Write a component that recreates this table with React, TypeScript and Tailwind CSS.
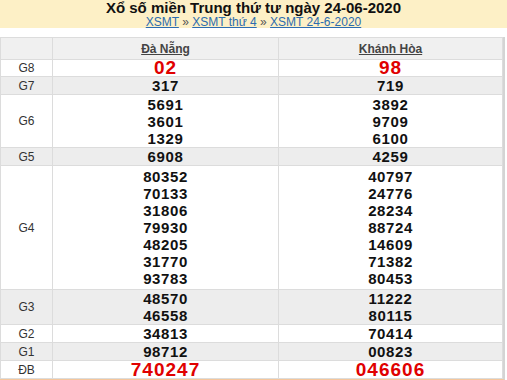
import React from "react";

type Row = {
  label: string;
  a: string[];
  b: string[];
  h: string;
  gray?: boolean;
  red?: boolean;
};

const rows: Row[] = [
  { label: "G8", a: ["02"], b: ["98"], h: "h-[17px]", red: true },
  { label: "G7", a: ["317"], b: ["719"], h: "h-[18px]", gray: true },
  { label: "G6", a: ["5691", "3601", "1329"], b: ["3892", "9709", "6100"], h: "h-[53px]" },
  { label: "G5", a: ["6908"], b: ["4259"], h: "h-[18px]", gray: true },
  {
    label: "G4",
    a: ["80352", "70133", "31806", "79930", "48205", "31770", "93783"],
    b: ["40797", "24776", "28234", "88724", "14609", "71382", "80453"],
    h: "h-[124px]",
  },
  { label: "G3", a: ["48570", "46558"], b: ["11222", "80115"], h: "h-[34px]", gray: true },
  { label: "G2", a: ["34813"], b: ["70414"], h: "h-[18px]" },
  { label: "G1", a: ["98712"], b: ["00823"], h: "h-[18px]", gray: true },
  { label: "ĐB", a: ["740247"], b: ["046606"], h: "h-[18px]", red: true },
];

const Cell = ({ nums, red }: { nums: string[]; red?: boolean }) => (
  <td className="border border-[#dcdcdc] p-0 text-center align-middle leading-[12px]">
    {nums.map((n) => (
      <div
        key={n}
        className={
          red
            ? "text-[19px] leading-[16px] font-bold tracking-[1px] text-[#e00000]"
            : "text-[15px] leading-[17px] font-bold tracking-[0.6px] text-[#111]"
        }
      >
        {n}
      </div>
    ))}
  </td>
);

export default function App() {
  return (
    <div className="w-[507px] h-[380px] overflow-hidden bg-white font-['Liberation_Sans',Arial,sans-serif]">
      <div className="h-[28px] bg-[#fdf0c6] text-center">
        <h1 className="text-[15px] leading-[16px] font-bold text-[#111]">
          Xổ số miền Trung thứ tư ngày 24-06-2020
        </h1>
        <div className="text-[12px] leading-[12px] text-[#555]">
          <a className="text-[#2c6cb0] underline">XSMT</a> »{" "}
          <a className="text-[#2c6cb0] underline">XSMT thứ 4</a> »{" "}
          <a className="text-[#2c6cb0] underline">XSMT 24-6-2020</a>
        </div>
      </div>
      <div className="mt-[9px] w-[505px] border-r-2 border-b border-b-[#f5c69b] border-r-[#d4d4d4]">
        <table className="w-[503px] border-collapse table-fixed">
          <colgroup>
            <col className="w-[52px]" />
            <col className="w-[226px]" />
            <col />
          </colgroup>
          <thead>
            <tr className="h-[22px] bg-[#f0f0f0]">
              <th className="border border-[#dcdcdc] p-0 leading-[14px]"></th>
              <th className="border border-[#dcdcdc] p-0 text-[12px] leading-[14px] font-bold text-[#444] underline">
                Đà Nẵng
              </th>
              <th className="border border-[#dcdcdc] p-0 text-[12px] leading-[14px] font-bold text-[#444] underline">
                Khánh Hòa
              </th>
            </tr>
          </thead>
          <tbody>
            {rows.map((r) => (
              <tr key={r.label} className={`${r.h} ${r.gray ? "bg-[#ededed]" : "bg-white"}`}>
                <td className="border border-[#dcdcdc] p-0 text-center text-[12px] leading-[14px] text-[#333]">
                  {r.label}
                </td>
                <Cell nums={r.a} red={r.red} />
                <Cell nums={r.b} red={r.red} />
              </tr>
            ))}
          </tbody>
        </table>
      </div>
    </div>
  );
}
